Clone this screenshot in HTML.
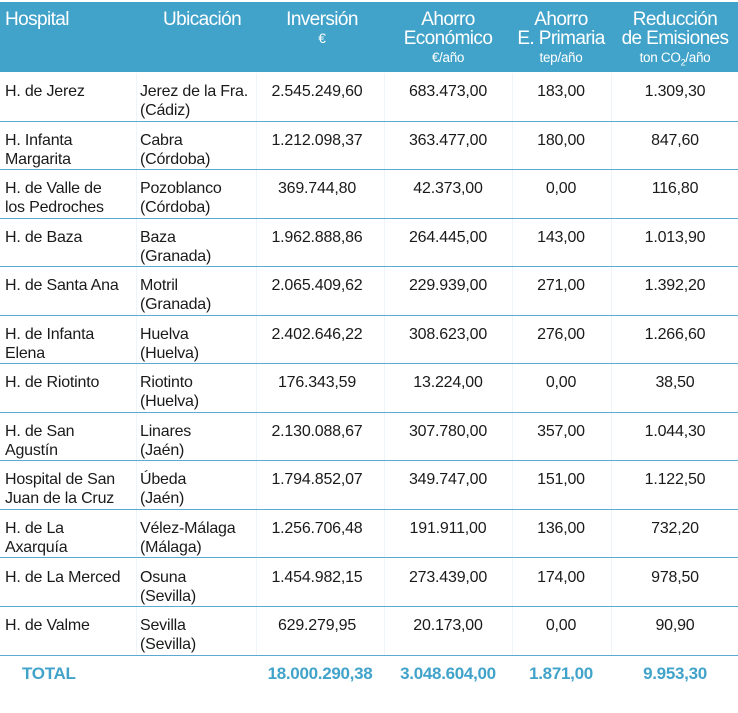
<!DOCTYPE html>
<html><head><meta charset="utf-8"><style>
*{margin:0;padding:0;box-sizing:border-box}
body{width:738px;height:713px;background:#fff;font-family:"Liberation Sans",sans-serif;color:#1a1a1a;position:relative;overflow:hidden}
.hd{position:absolute;left:0;top:2px;width:738px;height:70px;background:#42a3ca;color:#fff}
.hc{position:absolute;top:8px;font-size:19px;line-height:19px;text-align:center;letter-spacing:-0.6px}
.hc small{display:block;font-size:13.5px;line-height:19px;letter-spacing:-0.3px}
.row{position:absolute;left:0;width:738px;height:48.5px;border-bottom:1.5px solid #5aaad2}
.c{position:absolute;top:9px;font-size:16px;line-height:19px;letter-spacing:-0.2px;white-space:nowrap}
.v{position:absolute;top:0;width:1px;height:100%;background:#eef4f7}
.tot{color:#42a3ca;font-weight:bold;letter-spacing:-0.3px;font-size:17px}
</style></head><body>
<div class="hd">
<div class="hc" style="left:5px;text-align:left">Hospital</div>
<div class="hc" style="left:163px;text-align:left">Ubicación</div>
<div class="hc" style="left:262px;width:120px">Inversión<small>€</small></div>
<div class="hc" style="left:388px;width:120px">Ahorro<br>Económico<small>€/año</small></div>
<div class="hc" style="left:511px;width:100px">Ahorro<br>E. Primaria<small>tep/año</small></div>
<div class="hc" style="left:612px;width:126px">Reducción<br>de Emisiones<small>ton CO<sub style="font-size:9px">2</sub>/año</small></div>
</div>
<div id="rows"></div>
<script>
var d=[["H. de Jerez","Jerez de la Fra.<br>(Cádiz)","2.545.249,60","683.473,00","183,00","1.309,30"],
["H. Infanta<br>Margarita","Cabra<br>(Córdoba)","1.212.098,37","363.477,00","180,00","847,60"],
["H. de Valle de<br>los Pedroches","Pozoblanco<br>(Córdoba)","369.744,80","42.373,00","0,00","116,80"],
["H. de Baza","Baza<br>(Granada)","1.962.888,86","264.445,00","143,00","1.013,90"],
["H. de Santa Ana","Motril<br>(Granada)","2.065.409,62","229.939,00","271,00","1.392,20"],
["H. de Infanta<br>Elena","Huelva<br>(Huelva)","2.402.646,22","308.623,00","276,00","1.266,60"],
["H. de Riotinto","Riotinto<br>(Huelva)","176.343,59","13.224,00","0,00","38,50"],
["H. de San<br>Agustín","Linares<br>(Jaén)","2.130.088,67","307.780,00","357,00","1.044,30"],
["Hospital de San<br>Juan de la Cruz","Úbeda<br>(Jaén)","1.794.852,07","349.747,00","151,00","1.122,50"],
["H. de La<br>Axarquía","Vélez-Málaga<br>(Málaga)","1.256.706,48","191.911,00","136,00","732,20"],
["H. de La Merced","Osuna<br>(Sevilla)","1.454.982,15","273.439,00","174,00","978,50"],
["H. de Valme","Sevilla<br>(Sevilla)","629.279,95","20.173,00","0,00","90,90"]];
var h="";
d.forEach(function(r,i){
var t=73+i*48.55;
h+='<div class="row" style="top:'+t+'px"><div class="v" style="left:136px"></div><div class="v" style="left:256px"></div><div class="v" style="left:384px"></div><div class="v" style="left:512px"></div><div class="v" style="left:611px"></div>'+
'<div class="c" style="left:5px">'+r[0]+'</div><div class="c" style="left:140px">'+r[1]+'</div>'+
'<div class="c" style="left:257px;width:120px;text-align:center">'+r[2]+'</div>'+
'<div class="c" style="left:384px;width:128px;text-align:center">'+r[3]+'</div>'+
'<div class="c" style="left:511px;width:100px;text-align:center">'+r[4]+'</div>'+
'<div class="c" style="left:612px;width:126px;text-align:center">'+r[5]+'</div></div>';});
h+='<div style="position:absolute;top:656px;left:0;width:738px;height:40px">'+
'<div class="c tot" style="left:22px;top:8px">TOTAL</div>'+
'<div class="c tot" style="left:256px;top:8px;width:128px;text-align:center">18.000.290,38</div>'+
'<div class="c tot" style="left:384px;top:8px;width:128px;text-align:center">3.048.604,00</div>'+
'<div class="c tot" style="left:511px;top:8px;width:100px;text-align:center">1.871,00</div>'+
'<div class="c tot" style="left:612px;top:8px;width:126px;text-align:center">9.953,30</div></div>';
document.getElementById("rows").innerHTML=h;
</script>
</body></html>
